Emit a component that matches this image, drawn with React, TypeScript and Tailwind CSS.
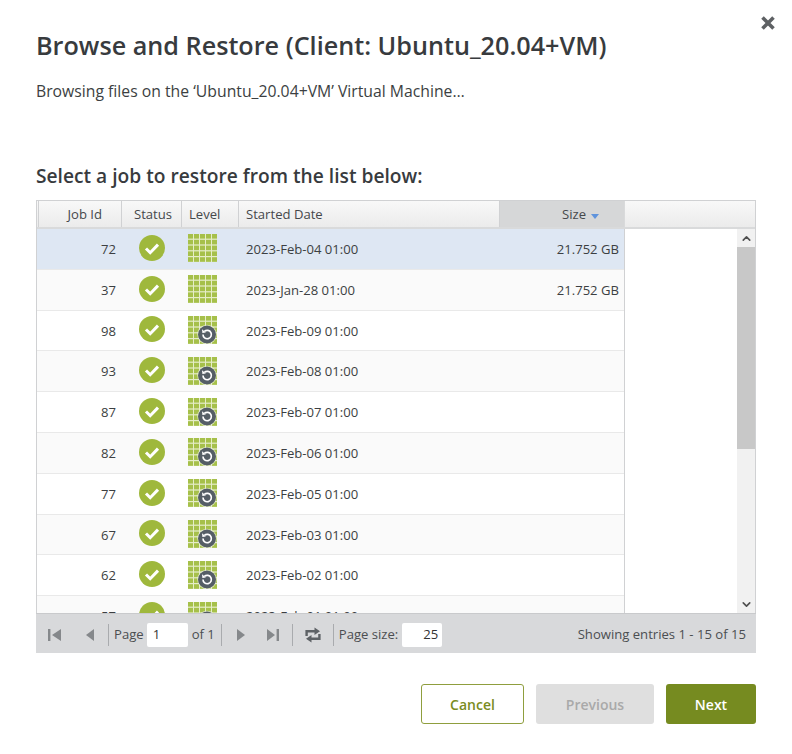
import { ChevronDown, ChevronUp } from "lucide-react";

const jobs = [
  { id: 72, level: "full", date: "2023-Feb-04 01:00", size: "21.752 GB", selected: true },
  { id: 37, level: "full", date: "2023-Jan-28 01:00", size: "21.752 GB" },
  { id: 98, level: "inc", date: "2023-Feb-09 01:00", size: "" },
  { id: 93, level: "inc", date: "2023-Feb-08 01:00", size: "" },
  { id: 87, level: "inc", date: "2023-Feb-07 01:00", size: "" },
  { id: 82, level: "inc", date: "2023-Feb-06 01:00", size: "" },
  { id: 77, level: "inc", date: "2023-Feb-05 01:00", size: "" },
  { id: 67, level: "inc", date: "2023-Feb-03 01:00", size: "" },
  { id: 62, level: "inc", date: "2023-Feb-02 01:00", size: "" },
  { id: 57, level: "inc", date: "2023-Feb-01 01:00", size: "" },
];

function StatusIcon() {
  return (
    <svg width="26" height="26" viewBox="0 0 26 26" className="block">
      <circle cx="13" cy="13" r="13" fill="#9fb83c" />
      <path d="M7 13.5l4.2 4.2L19 9.6" fill="none" stroke="#fff" strokeWidth="3" />
    </svg>
  );
}

function LevelIcon({ restore }: { restore: boolean }) {
  const cells = [0, 1, 2, 3, 4];
  return (
    <svg width="30" height="29" viewBox="0 0 30 29" className="block">
      <rect width="29" height="28" fill="#e6edc8" />
      {cells.map((r) =>
        cells.map((c) => (
          <rect key={`${r}-${c}`} x={c * 6} y={r * 5.8} width="5" height="4.6" fill="#a6c04a" />
        )),
      )}
      {restore && (
        <g>
          <circle cx="19" cy="18.5" r="9.8" fill="#fff" fillOpacity="0.55" />
          <circle cx="19" cy="18.5" r="9" fill="#555e66" />
          <path d="M15 18.5a4.2 4.2 0 1 0 1.4-3.1" fill="none" stroke="#fff" strokeWidth="1.7" />
          <path d="M14 13.3l.4 3.6 3.5-.5z" fill="#fff" />
        </g>
      )}
    </svg>
  );
}

function Sep() {
  return <span className="block h-[22px] w-px bg-[#a9abae]" />;
}

function PagerIcon({ d }: { d: string }) {
  return (
    <svg width="16" height="16" viewBox="0 0 16 16" fill="#85888b" className="block">
      <path d={d} />
    </svg>
  );
}

function RefreshIcon() {
  return (
    <svg width="16" height="16" viewBox="0 0 16 16" className="block">
      <path d="M1.6 9V4.2H10M14.4 7v4.8H6" fill="none" stroke="#5e6266" strokeWidth="2.4" />
      <path d="M9.5 0.5L15 4.2 9.5 8zM6.5 8L1 11.8l5.5 3.7z" fill="#5e6266" />
    </svg>
  );
}

export default function App() {
  return (
    <div className="relative h-[754px] w-[792px] overflow-hidden bg-white pl-[36px] pr-[36px] pt-[28px] font-['Open_Sans',sans-serif] text-[#3c3f42]">
      <button className="absolute right-[15px] top-[14px] text-[#5e6164]">
        <svg width="18" height="18" viewBox="0 0 18 18">
          <path d="M3.5 3.5l11 11M14.5 3.5l-11 11" stroke="currentColor" strokeWidth="3.6" />
        </svg>
      </button>

      <h1 className="text-[25.2px] font-semibold leading-[34px] text-[#383b3e]">
        Browse and Restore (Client: Ubuntu_20.04+VM)
      </h1>
      <p className="mt-[19px] text-[15.75px] leading-[20px]">
        Browsing files on the ‘Ubuntu_20.04+VM’ Virtual Machine…
      </p>
      <h2 className="mt-[62px] text-[19.2px] font-semibold leading-[26px] text-[#383b3e]">
        Select a job to restore from the list below:
      </h2>

      <div className="mt-[11px] w-[720px]">
        <div className="border-x border-t border-[#d0d1d3]">
          {/* header */}
          <div className="flex h-[28px] border-b-2 border-[#d9dadb] bg-gradient-to-b from-[#f8f8f8] to-[#ebebeb] text-[13.1px] text-[#45484b]">
            <div className="w-px" />
            <div className="flex w-[84px] items-center justify-end border-x border-[#d0d1d3] pr-[19px] pt-[2px]">Job Id</div>
            <div className="flex w-[60px] items-center border-r border-[#d0d1d3] pl-[12px] pt-[2px]">Status</div>
            <div className="flex w-[57px] items-center border-r border-[#d0d1d3] pl-[7px] pt-[2px]">Level</div>
            <div className="flex w-[261px] items-center border-r border-[#d0d1d3] pl-[7px] pt-[2px]">Started Date</div>
            <div className="flex w-[124px] items-center justify-end gap-[5px] bg-[#d6d7d8] pr-[25px] pt-[2px]">
              Size
              <span className="mt-[2px] h-0 w-0 border-x-[4.5px] border-t-[5px] border-x-transparent border-t-[#5f93dc]" />
            </div>
            <div className="flex-1 border-l border-[#d9dadb]" />
          </div>

          {/* rows */}
          <div className="flex h-[384px] overflow-hidden">
            <div className="w-[588px] shrink-0 border-r border-[#d0d1d3]">
              {jobs.map((job, i) => (
                <div
                  key={job.id}
                  className={`flex h-[40.8px] items-center border-b border-[#e9e9e9] pt-[2px] text-[13.1px] ${
                    job.selected ? "bg-[#dee7f3]" : i % 2 === 1 ? "bg-[#fafafa]" : "bg-white"
                  }`}
                >
                  <div className="w-[79px] text-right">{job.id}</div>
                  <div className="flex w-[70px] justify-center pb-[4px] pl-[1px]">
                    <StatusIcon />
                  </div>
                  <div className="flex w-[34px] justify-center pb-[2px]">
                    <LevelIcon restore={job.level === "inc"} />
                  </div>
                  <div className="w-[279px] pl-[26px]">{job.date}</div>
                  <div className="flex-1 pr-[5px] text-right">{job.size}</div>
                </div>
              ))}
            </div>
            <div className="flex-1" />
            <div className="flex w-[18px] shrink-0 flex-col bg-[#cdcdcd]">
              <div className="flex h-[18px] items-center justify-center bg-[#f1f1f1]">
                <ChevronUp size={13} strokeWidth={3} color="#505050" />
              </div>
              <div className="h-[202px] bg-[#c8c8c8]" />
              <div className="flex-1 bg-[#f1f1f1]" />
              <div className="flex h-[18px] items-center justify-center bg-[#f1f1f1]">
                <ChevronDown size={13} strokeWidth={3} color="#505050" />
              </div>
            </div>
          </div>
        </div>

        {/* pager */}
        <div className="flex h-[40px] items-center border-t border-[#c9cacc] bg-[#d8d9db] pl-[11px] pr-[10px] pt-[2px] text-[13.1px] text-[#4b4e51]">
          <PagerIcon d="M1 2h2.4v12H1zM14 2v12L5 8z" />
          <span className="ml-[20px]">
            <PagerIcon d="M11 2v12L3 8z" />
          </span>
          <span className="ml-[9px]"><Sep /></span>
          <span className="ml-[5px]">Page</span>
          <span className="ml-[3px] flex h-[24px] w-[41px] items-center rounded-[2px] bg-white pl-[6px] text-[#333]">1</span>
          <span className="ml-[4px]">of 1</span>
          <span className="ml-[6px]"><Sep /></span>
          <span className="ml-[10px]">
            <PagerIcon d="M5 2v12l8-6z" />
          </span>
          <span className="ml-[17px]">
            <PagerIcon d="M2 2v12l8-6zM11.6 2H14v12h-2.4z" />
          </span>
          <span className="ml-[11px]"><Sep /></span>
          <span className="ml-[12px]">
            <RefreshIcon />
          </span>
          <span className="ml-[12px]"><Sep /></span>
          <span className="ml-[5px]">Page size:</span>
          <span className="ml-[4px] flex h-[24px] w-[40px] items-center justify-end rounded-[2px] bg-white pr-[4px] text-[#333]">25</span>
          <span className="ml-auto">Showing entries 1 - 15 of 15</span>
        </div>

        {/* actions */}
        <div className="mt-[31px] flex justify-end gap-[12px] text-[14px] font-semibold">
          <button className="h-[40px] w-[103px] rounded-[3px] border border-[#8f9e3e] bg-white text-[#7a8c22]">Cancel</button>
          <button className="h-[40px] w-[118px] rounded-[3px] bg-[#dfdfdf] text-[#a9a9a9]">Previous</button>
          <button className="h-[40px] w-[90px] rounded-[3px] bg-[#768b20] text-white">Next</button>
        </div>
      </div>
    </div>
  );
}
